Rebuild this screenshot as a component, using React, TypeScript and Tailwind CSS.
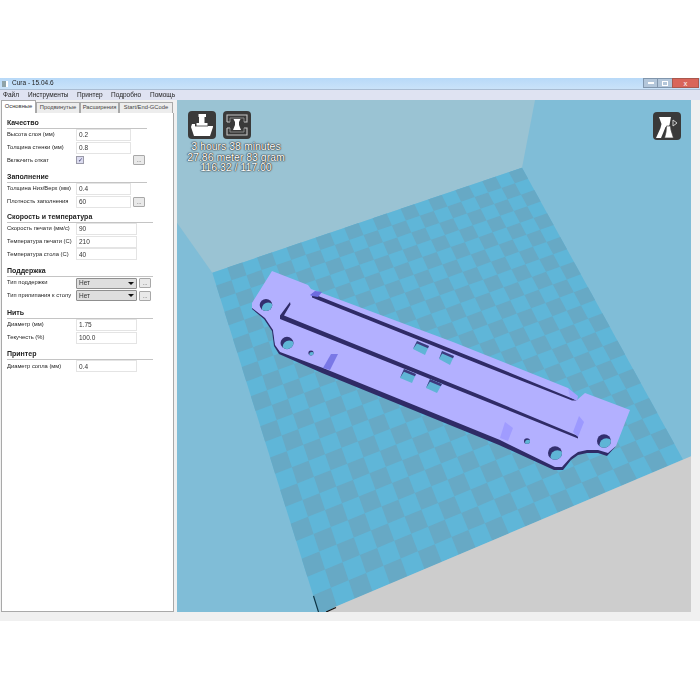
const FONT = "font-['Liberation_Sans',Arial,sans-serif]";

type P = [number, number];

function homography(c: [P, P, P, P]) {
  const [[x0, y0], [x1, y1], [x2, y2], [x3, y3]] = c;
  const dx1 = x1 - x2, dx2 = x3 - x2, sx = x0 - x1 + x2 - x3;
  const dy1 = y1 - y2, dy2 = y3 - y2, sy = y0 - y1 + y2 - y3;
  const d = dx1 * dy2 - dx2 * dy1;
  const g = (sx * dy2 - dx2 * sy) / d;
  const h = (dx1 * sy - sx * dy1) / d;
  const a = x1 - x0 + g * x1, b = x3 - x0 + h * x3, e = y1 - y0 + g * y1, f = y3 - y0 + h * y3;
  return (u: number, v: number): P => {
    const w = g * u + h * v + 1;
    return [(a * u + b * v + x0) / w, (e * u + f * v + y0) / w];
  };
}

const N = 22;
const M = 22;
const map = homography([[522, 167.7], [212.3, 272.7], [319, 614], [683, 459.5]]);

function Floor() {
  const cells = [];
  for (let i = 0; i < N; i++) {
    for (let j = 0; j < M; j++) {
      if ((i + j) % 2 === 0) {
        const pts = [map(i / N, j / M), map((i + 1) / N, j / M), map((i + 1) / N, (j + 1) / M), map(i / N, (j + 1) / M)];
        cells.push(<polygon key={i + "-" + j} points={pts.map((p) => p.join(",")).join(" ")} fill="#67a9c5" />);
      }
    }
  }
  return <g>{cells}</g>;
}

const TOP =
  "252,303 272,271 308,285 311,289 453,342 568,388 577,400 585,393 630,410 616,446 608,453 598,450 587,450 578,452 571,457 562,467 555,467 500,440 323,368 280,352 275,345 273,330 265,318 252,308";
const SIDE =
  "252,303 252,309 264,319 272,331 274,346 279,354 322,373 499,445 554,470 563,470 571,460 578,455 587,453 598,453 607,456 616,446 608,450 598,448 587,448 578,450 571,455 562,465 555,465 500,438 323,366 280,350 275,343 273,328 265,316 252,306";

function Hole({ x, y, r }: { x: number; y: number; r: number }) {
  const id = "h" + x;
  return (
    <g>
      <clipPath id={id}>
        <ellipse cx={x} cy={y} rx={r} ry={r * 0.95} />
      </clipPath>
      <ellipse cx={x} cy={y} rx={r} ry={r * 0.95} fill="#332f6e" />
      <ellipse cx={x + r * 0.35} cy={y + r * 0.55} rx={r} ry={r * 0.95} fill="#5fb5d6" clipPath={`url(#${id})`} />
    </g>
  );
}

function Win({ p }: { p: P[] }) {
  const [a, b, c, d] = p;
  const lerp = (s: P, t: P, k: number): P => [s[0] + (t[0] - s[0]) * k, s[1] + (t[1] - s[1]) * k];
  const a2 = lerp(a, d, 0.25);
  const b2 = lerp(b, c, 0.25);
  const a3 = lerp(a2, b2, 0.08);
  return (
    <g>
      <polygon points={p.map((q) => q.join(",")).join(" ")} fill="#5fb5d6" />
      <polygon points={[a, b, b2, a3, d].map((q) => q.join(",")).join(" ")} fill="#3d3a7e" />
    </g>
  );
}

function Scene() {
  return (
    <svg viewBox="177 100 514 512" className="block w-[514px] h-[512px]">
      <rect x="177" y="100" width="514" height="512" fill="#80bdd7" />
      <polygon points="177,100 535,100 522,167.7 212.3,272.7 177,222.7" fill="#9ac3d3" />
      <polygon points="522,167.7 212.3,272.7 319,614 683,459.5" fill="#5fb6d8" />
      <Floor />
      <polygon points="336,606.5 691.7,456 691,612 327,612" fill="#cdcdcd" />
      <polyline points="313.5,596 318.5,612" stroke="#0d3344" strokeWidth="1.2" fill="none" />
      <polyline points="326,612 336,607.5" stroke="#111" strokeWidth="1.2" fill="none" />

      <polygon points={SIDE} fill="#2f2b66" />
      <polygon points={TOP} fill="#b3b0ff" />

      <polygon points="312,293.5 480,360.5 577,400.5 572,400.5 480,364.5 312,297.5" fill="#2f2b66" />
      <polygon points="280,315.5 290,302 290.5,304.5 284,315.5 480,395 578,436 578,438.5 480,399 280,319" fill="#2f2b66" />
      <polygon points="310,295 315,291 322,292 318,297 312,296" fill="#6e6ce0" />
      <polygon points="323,368 331,354 338,354 330,370" fill="#7a78e6" />
      <polygon points="500,438 505,422 513,428 508,441" fill="#a09cff" />
      <polygon points="573,432 579,416 584,422 578,437" fill="#9c99ff" />
      <polygon points="568,388 578,396 577,401 570,397" fill="#a5a2ff" />

      <Win p={[[417, 341], [429, 346], [425, 355], [413, 349]]} />
      <Win p={[[442, 351], [454, 356], [450, 365], [439, 359]]} />
      <Win p={[[404, 369], [416, 374], [412, 383], [400, 378]]} />
      <Win p={[[430, 379], [442, 384], [437, 393], [426, 388]]} />

      <Hole x={266} y={305} r={6.3} />
      <Hole x={287} y={343} r={6.5} />
      <Hole x={311} y={353} r={2.6} />
      <Hole x={555} y={453} r={7} />
      <Hole x={604} y={441} r={7} />
      <Hole x={527} y={441} r={3} />
    </svg>
  );
}

function LoadIcon() {
  return (
    <svg viewBox="0 0 28 28" className="w-7 h-7 block">
      <rect width="28" height="28" rx="4" fill="#3a3a3a" />
      <path d="M10.5 3h7.5v3h-1.5v6h3v3h-11v-3h2.5V6h-.5z" fill="#fff" />
      <path d="M4 13h3v2h18v1L22 25H6L3 16z" fill="#fff" />
      <path d="M7 15h13" stroke="#3a3a3a" strokeWidth="0.8" />
    </svg>
  );
}

function FrameIcon() {
  return (
    <svg viewBox="0 0 28 28" className="w-7 h-7 block">
      <rect width="28" height="28" rx="4" fill="#3a3a3a" />
      <path d="M4 11V4h20v7h-3M4 17v7h20v-7h-3M4 11h3M4 17h3" fill="none" stroke="#c4c4c4" strokeWidth="1.1" />
      <path d="M7 11V7h14v4M7 17v4h14v-4" fill="none" stroke="#8f8f8f" strokeWidth="0.9" />
      <path d="M10.5 8h7l-1.5 3v3l2 5H10l2-5v-3z" fill="#fff" />
    </svg>
  );
}

function ViewIcon() {
  return (
    <svg viewBox="0 0 28 28" className="w-7 h-7 block">
      <rect width="28" height="28" rx="4" fill="#3a3a3a" />
      <path d="M6 5h12l-1.5 8-1 2h-3l-2 5-2.5 6H3l4.5-10 1-4z" fill="#fff" />
      <path d="M13.5 14h4l.5 4 2.5 8h-9l1.5-6z" fill="#fff" stroke="#3a3a3a" strokeWidth="0.7" />
      <path d="M20 8l4 3-4 3z" fill="none" stroke="#ddd" strokeWidth="0.9" />
    </svg>
  );
}

function Row({ label, children }: { label: string; children: React.ReactNode }) {
  return (
    <div className="flex items-center h-[12.6px]">
      <span className="w-[69px] shrink-0 text-[5.8px] leading-none text-[#222] whitespace-nowrap">{label}</span>
      {children}
    </div>
  );
}

function Field({ value, wide = false }: { value: string; wide?: boolean }) {
  return (
    <div className={`${wide ? "w-[61px]" : "w-[55px]"} h-[12px] bg-white border border-[#e4e4e4] pl-[2px] flex items-center text-[6.5px] text-[#333]`}>
      {value}
    </div>
  );
}

function Dots({ cls = "" }: { cls?: string }) {
  return (
    <div className={`w-[12px] h-[10px] rounded-[1px] bg-[#e9e9e9] border border-[#a8a8a8] flex items-center justify-center text-[6px] leading-none text-[#444] ${cls}`}>
      ...
    </div>
  );
}

function Select({ value }: { value: string }) {
  return (
    <div className="w-[61px] h-[11px] bg-[#dedede] border border-[#8f8f8f] rounded-[1px] pl-[2px] pr-[2px] flex items-center justify-between text-[6.5px] text-[#333]">
      {value}
      <span className="w-0 h-0 border-x-[3px] border-x-transparent border-t-[3px] border-t-[#111]" />
    </div>
  );
}

function Section({ title, mt, width, children }: { title: string; mt: string; width: string; children: React.ReactNode }) {
  return (
    <div className={mt}>
      <div className={`${width} h-[11px] border-b border-[#c4c4c4] text-[7px] leading-[10px] font-bold text-[#222]`}>{title}</div>
      {children}
    </div>
  );
}

function Tab({ label, w, active = false }: { label: string; w: string; active?: boolean }) {
  return (
    <div
      className={`${w} text-[5.8px] leading-none flex items-center justify-center whitespace-nowrap border border-[#a9a9a9] border-b-0 ${
        active ? "h-[13px] bg-white text-[#333]" : "h-[11px] bg-[#ededed] text-[#444]"
      }`}
    >
      {label}
    </div>
  );
}

export default function App() {
  return (
    <div className={`${FONT} w-[700px] h-[700px] bg-white overflow-hidden pt-[78px]`}>
      <div className="w-[700px] h-[543px] flex flex-col bg-[#f0f0f0]">
        <div className="h-[11px] shrink-0 bg-gradient-to-b from-[#b8d9f8] to-[#c9e2f9] flex items-center justify-between">
          <div className="flex items-center pl-[2px] text-[6.5px] leading-none text-[#222] blur-[0.25px]">
            <span className="w-[6px] h-[6px] bg-[#8fa3a8] border-r-2 border-white mr-[4px]" />
            Cura - 15.04.6
          </div>
          <div className="flex h-[10px] self-start mr-[1px]">
            <div className="w-[15px] bg-[#b3c6da] border border-[#8196ad] flex items-center justify-center">
              <span className="w-[6px] h-[2px] bg-white" />
            </div>
            <div className="w-[14px] bg-[#b3c6da] border-y border-[#8196ad] flex items-center justify-center">
              <span className="w-[6px] h-[5px] border border-white" />
            </div>
            <div className="w-[27px] bg-[#d9655a] border border-[#a9584e] flex items-center justify-center text-[7px] leading-none font-bold text-[#f3dcd8]">
              x
            </div>
          </div>
        </div>
        <div className="h-[11px] shrink-0 bg-[#dfe3f2] border-t border-[#a9bcd2] flex items-center text-[6.5px] leading-none text-[#222] pl-[3px]">
          <span className="w-[25px] blur-[0.25px]">Файл</span>
          <span className="w-[49px] blur-[0.25px]">Инструменты</span>
          <span className="w-[34px] blur-[0.25px]">Принтер</span>
          <span className="w-[39px] blur-[0.25px]">Подробно</span>
          <span className="blur-[0.25px]">Помощь</span>
        </div>
        <div className="flex h-[512px] shrink-0">
          <div className="w-[177px] shrink-0 flex flex-col pl-[1px] pr-[3px] bg-[#f0f0f0]">
            <div className="flex items-end h-[13px] shrink-0">
              <Tab label="Основные" w="w-[35px]" active />
              <Tab label="Продвинутые" w="w-[44px]" />
              <Tab label="Расширения" w="w-[39px]" />
              <Tab label="Start/End-GCode" w="w-[54px]" />
            </div>
            <div className="flex-1 bg-white border border-t-0 border-[#a9a9a9] pl-[5px] blur-[0.25px]">
              <Section title="Качество" mt="mt-[5px]" width="w-[140px]">
                <Row label="Высота слоя (мм)"><Field value="0.2" /></Row>
                <Row label="Толщина стенки (мм)"><Field value="0.8" /></Row>
                <Row label="Включить откат">
                  <div className="w-[56px] flex items-center">
                    <div className="w-[8px] h-[8px] bg-[#dcdcf0] border border-[#9a9aa8] flex items-center justify-center text-[6px] leading-none text-[#336]">✓</div>
                  </div>
                  <Dots cls="ml-[1px]" />
                </Row>
              </Section>
              <Section title="Заполнение" mt="mt-[5px]" width="w-[140px]">
                <Row label="Толщина Низ/Верх (мм)"><Field value="0.4" /></Row>
                <Row label="Плотность заполнения"><Field value="60" /><Dots cls="ml-[2px]" /></Row>
              </Section>
              <Section title="Скорость и температура" mt="mt-[4px]" width="w-[146px]">
                <Row label="Скорость печати (мм/с)"><Field value="90" wide /></Row>
                <Row label="Температура печати (С)"><Field value="210" wide /></Row>
                <Row label="Температура стола (С)"><Field value="40" wide /></Row>
              </Section>
              <Section title="Поддержка" mt="mt-[5px]" width="w-[146px]">
                <Row label="Тип поддержки"><Select value="Нет" /><Dots cls="ml-[2px]" /></Row>
                <Row label="Тип прилипания к столу"><Select value="Нет" /><Dots cls="ml-[2px]" /></Row>
              </Section>
              <Section title="Нить" mt="mt-[6px]" width="w-[146px]">
                <Row label="Диаметр (мм)"><Field value="1.75" wide /></Row>
                <Row label="Текучесть (%)"><Field value="100.0" wide /></Row>
              </Section>
              <Section title="Принтер" mt="mt-[5px]" width="w-[146px]">
                <Row label="Диаметр сопла (мм)"><Field value="0.4" wide /></Row>
              </Section>
            </div>
          </div>
          <div className="relative w-[514px] h-[512px] shrink-0">
            <Scene />
            <div className="absolute left-[11px] top-[11px] flex gap-[7px]">
              <LoadIcon />
              <FrameIcon />
            </div>
            <div className="absolute left-[2px] top-[41px] w-[114px] text-center text-[10.5px] leading-[10.5px] text-white [text-shadow:0_0_1px_#222,0_0_1px_#222,0_0_2px_#444]">
              <div>3 hours 38 minutes</div>
              <div>27.86 meter 83 gram</div>
              <div>116.32 / 117.00</div>
            </div>
            <div className="absolute right-[10px] top-[12px]">
              <ViewIcon />
            </div>
          </div>
          <div className="flex-1" />
        </div>
      </div>
    </div>
  );
}
